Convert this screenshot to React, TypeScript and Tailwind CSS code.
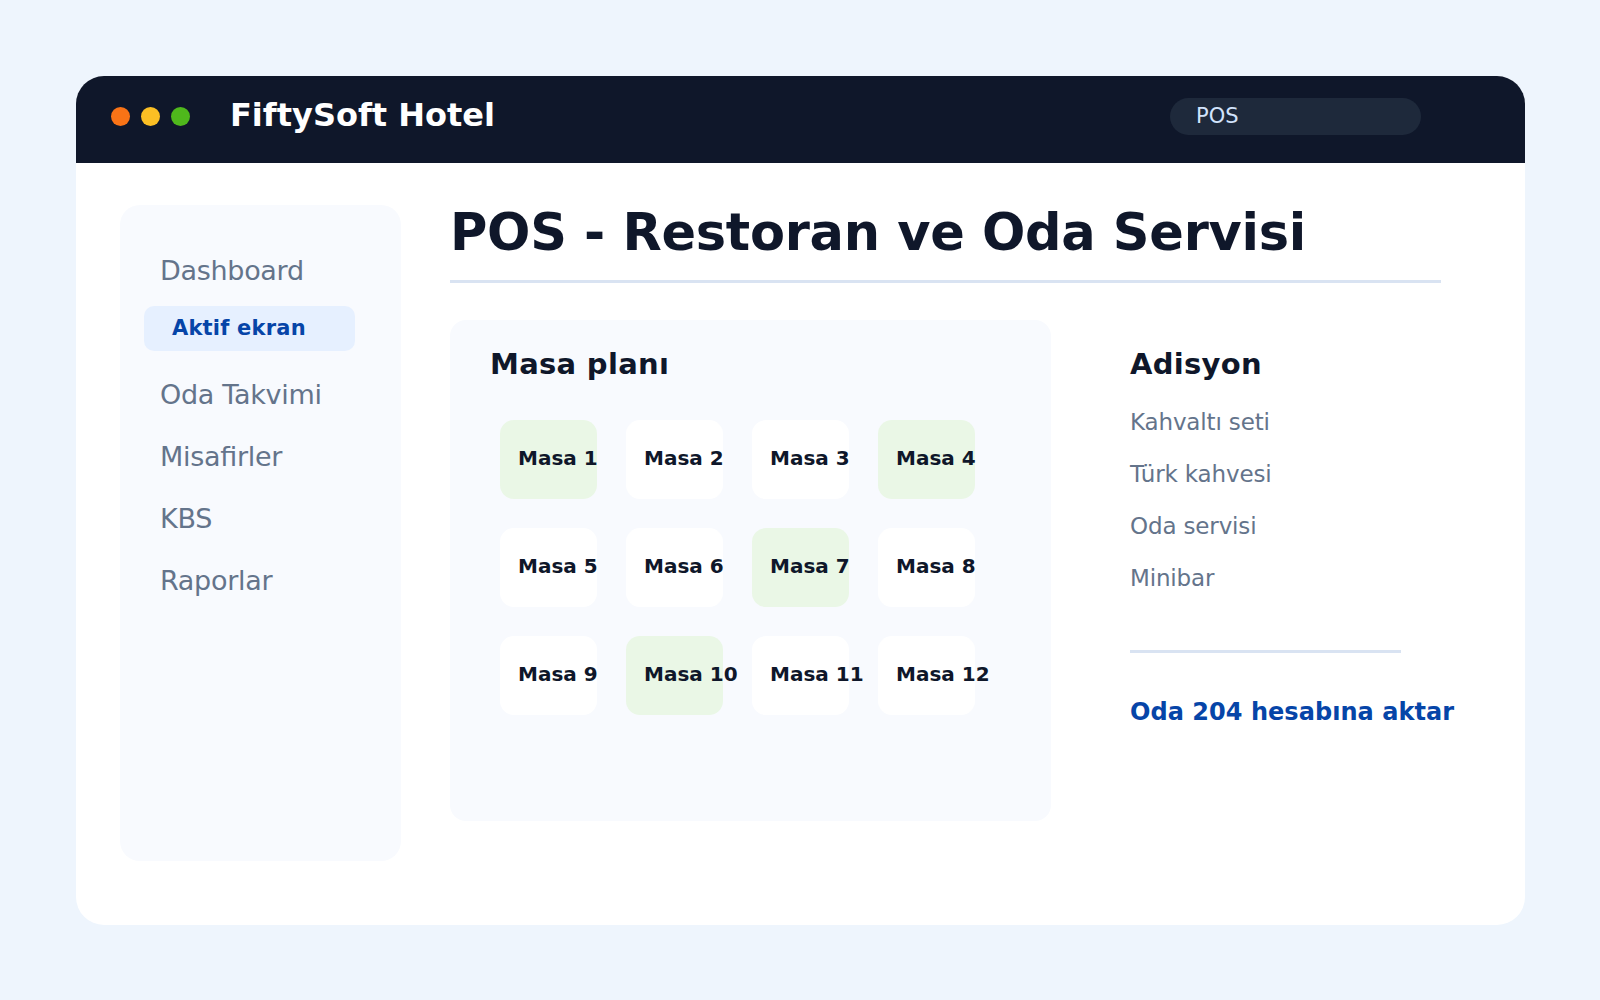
const menu = ["Oda Takvimi", "Misafirler", "KBS", "Raporlar"];

const tables = Array.from({ length: 12 }, (_, i) => ({
  id: i + 1,
  busy: [1, 4, 7, 10].includes(i + 1),
}));

const bill = ["Kahvaltı seti", "Türk kahvesi", "Oda servisi", "Minibar"];

function TitleBar() {
  return (
    <header className="flex h-[87px] items-start bg-[#0f172a] pl-[35px]">
      <div className="mt-[31px] flex gap-[11px]">
        <span className="h-[19px] w-[19px] rounded-full bg-[#f97316]" />
        <span className="h-[19px] w-[19px] rounded-full bg-[#fbbf24]" />
        <span className="h-[19px] w-[19px] rounded-full bg-[#4fb81c]" />
      </div>
      <div className="mt-[19px] ml-10 w-[940px] text-[32px] leading-10 font-bold text-white">
        FiftySoft Hotel
      </div>
      <div className="mt-[22px] h-[37px] w-[251px] rounded-full bg-[#1e293b] pl-[26px] text-[21px] leading-9 text-[#d2e3fc]">
        POS
      </div>
    </header>
  );
}

function Sidebar() {
  return (
    <aside className="h-[656px] w-[281px] rounded-[20px] bg-[#f8fafe] pt-[46px] text-[27px] leading-10 tracking-[-0.3px] text-[#64748b] [font-feature-settings:'liga'_1]">
      <div className="pl-10">Dashboard</div>
      <div className="mt-[15px] ml-6 h-[45px] w-[211px] rounded-[10px] bg-[#e6f0ff] pl-7 text-[21px] leading-[45px] font-bold tracking-[0.2px] text-[#0645a8]">
        Aktif ekran
      </div>
      <nav className="mt-6 flex flex-col gap-[22px] pl-10">
        {menu.map((item) => (
          <a key={item}>{item}</a>
        ))}
      </nav>
    </aside>
  );
}

function TablePlan() {
  return (
    <section className="h-[501px] w-[601px] rounded-[16px] bg-[#f8fafe] pt-6">
      <h2 className="pl-10 text-[29px] leading-10 font-bold tracking-[0.3px]">
        Masa planı
      </h2>
      <div className="mt-9 ml-[50px] grid w-fit grid-cols-[repeat(4,97px)] gap-[29px]">
        {tables.map((table) => (
          <div
            key={table.id}
            className={`h-[79px] rounded-[14px] pl-[18px] text-[20px] leading-[76px] font-bold whitespace-nowrap ${
              table.busy ? "bg-[#eaf7e6]" : "bg-white"
            }`}
          >
            Masa {table.id}
          </div>
        ))}
      </div>
    </section>
  );
}

function Bill() {
  return (
    <section className="pt-6 whitespace-nowrap">
      <h2 className="text-[29px] leading-10 font-bold tracking-[0.3px]">
        Adisyon
      </h2>
      <ul className="mt-3 text-[23px] leading-[52px] tracking-[-0.15px] text-[#64748b]">
        {bill.map((item) => (
          <li key={item}>{item}</li>
        ))}
      </ul>
      <div className="mt-[46px] h-[3px] w-[271px] bg-[#d9e3f2]" />
      <div className="mt-[39px] text-[24px] leading-10 font-bold tracking-[0.04px] text-[#0645a8]">
        Oda 204 hesabına aktar
      </div>
    </section>
  );
}

export default function App() {
  return (
    <div className="h-[1000px] w-[1600px] overflow-hidden bg-[#eef5fd] pt-[76px] pl-[76px] font-['DejaVu_Sans',sans-serif] text-[#0f172a]">
      <div className="h-[849px] w-[1449px] overflow-hidden rounded-[28px] bg-white">
        <TitleBar />
        <div className="flex pt-[42px] pl-11">
          <Sidebar />
          <main className="ml-[49px]">
            <h1 className="text-[51px] leading-[56px] font-bold tracking-[-0.28px] whitespace-nowrap">
              POS - Restoran ve Oda Servisi
            </h1>
            <div className="mt-[19px] h-[3px] w-[991px] bg-[#d9e3f2]" />
            <div className="mt-[37px] flex gap-[79px]">
              <TablePlan />
              <Bill />
            </div>
          </main>
        </div>
      </div>
    </div>
  );
}
